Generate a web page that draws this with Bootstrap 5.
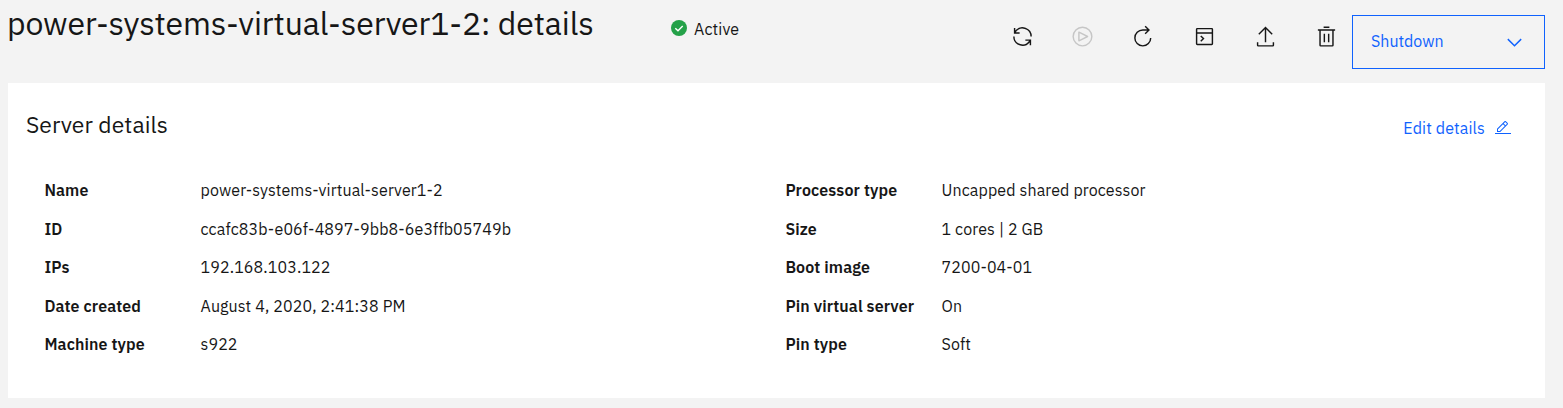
<!DOCTYPE html>
<html lang="en">
<head>
<meta charset="utf-8">
<meta name="viewport" content="width=device-width, initial-scale=1">
<title>power-systems-virtual-server1-2: details</title>
<link rel="stylesheet" href="https://cdn.jsdelivr.net/npm/bootstrap@5.3.0/dist/css/bootstrap.min.css">
<style>
  body { background: #f3f3f3; color: #161616; font-family: "IBM Plex Sans", "Noto Sans", sans-serif; font-size: 16px; line-height: 20px; letter-spacing: .12px; overflow: hidden; }
  svg { fill: currentColor; display: block; flex: none; }
  .page { padding: 0 18px 10px 8px; }
  .page-head { height: 83px; }
  .page-title { font-size: 32px; line-height: 40px; letter-spacing: -.1px; margin: 3px 0 0 -1px; width: 664px; }
  .status { gap: 7px; padding-top: 19px; height: 40px; }
  .status svg { margin-top: 1px; }
  .tools { gap: 37.8px; padding-top: 25px; margin-right: 14.4px; }
  .tool { padding: 0; border: 0; background: none; color: #161616; }
  .tool:disabled { color: #c6c6c6; }
  .btn-action { width: 193px; height: 54px; margin-top: 15px; border: 1px solid #0f62fe; border-radius: 0; color: #0f62fe; font-size: 16px; line-height: 20px; padding: 0 18px; }
  .btn-action span { margin-bottom: 2px; }
  .panel { height: 315px; border: 0; border-radius: 0; color: inherit; padding: 0 33px 0 18px; }
  .panel-title { font-size: 22.9px; line-height: 28px; letter-spacing: .06px; margin: 28px 0 0; }
  .edit-link { color: #0f62fe; gap: 10px; margin: 35px 1px 0 0; }
  .edit-link svg { margin-top: 2px; }
  .facts { margin: 32px 0 0 18px; }
  .fact-list { width: 741px; flex: none; }
  .fact-list + .fact-list { width: 600px; }
  .fact { height: 38.5px; }
  .fact dt { width: 156px; font-weight: 600; padding-left: .4px; }
  .fact dd { margin: 0 0 0 .5px; }
</style>
</head>
<body>
<main class="page">
  <header class="page-head d-flex align-items-start">
    <h1 class="page-title fw-normal text-nowrap">power-systems-virtual-server1-2: details</h1>
    <div class="status d-flex align-items-start">
      <svg width="16" height="16" viewBox="0 0 16 16" aria-hidden="true"><circle cx="8" cy="8" r="8" fill="#24a148"/><path d="M4.3 8.2 7 10.8l4.7-4.7" fill="none" stroke="#fff" stroke-width="1.4"/></svg>
      <span>Active</span>
    </div>
    <div class="tools d-flex ms-auto">
      <button class="tool" aria-label="Refresh"><svg width="23" height="23" viewBox="0 0 32 32"><path d="M12 10H6.780A11 11 0 0 1 27 16h2A13 13 0 0 0 6 7.680V4H4v8h8zM20 22h5.220A11 11 0 0 1 5 16H3a13 13 0 0 0 23 8.320V28h2v-8h-8z"/></svg></button>
      <button class="tool" aria-label="Start" disabled><svg width="23" height="23" viewBox="0 0 32 32"><path d="M11 23a1 1 0 0 1-1-1V10a1 1 0 0 1 1.447-.894l12 6a1 1 0 0 1 0 1.788l-12 6A1 1 0 0 1 11 23zm1-11.382v8.764L20.764 16z"/><path d="M16 2a14 14 0 1 0 14 14A14 14 0 0 0 16 2zm0 26a12 12 0 1 1 12-12 12 12 0 0 1-12 12z"/></svg></button>
      <button class="tool" aria-label="Restart"><svg width="23" height="23" viewBox="1 0 32 32"><path d="M26 18A10 10 0 1 1 16 8h6.182l-3.585 3.585L20 13l6-6-6-6-1.402 1.414L22.185 6H16a12 12 0 1 0 12 12z"/></svg></button>
      <button class="tool" aria-label="Open console"><svg width="23" height="23" viewBox="0 0 32 32"><path d="M26 4H6a2 2 0 0 0-2 2v20a2 2 0 0 0 2 2h20a2 2 0 0 0 2-2V6a2 2 0 0 0-2-2zm0 2v4H6V6zM6 26V12h20v14z"/><path d="M10.800 15.200l3.800 3.700-3.800 3.700" fill="none" stroke="currentColor" stroke-width="2"/></svg></button>
      <button class="tool" aria-label="Export"><svg width="23" height="23" viewBox="0 0 32 32"><path d="M26 24v4H6v-4H4v4a2 2 0 0 0 2 2h20a2 2 0 0 0 2-2v-4zM6 12l1.411 1.405L15 5.825V24h2V5.825l7.591 7.580L26 12 16 2z"/></svg></button>
      <button class="tool" aria-label="Delete"><svg width="23" height="23" viewBox="0 0 32 32"><path d="M12 12h2v12h-2zM18 12h2v12h-2zM4 6v2h2v20a2 2 0 0 0 2 2h16a2 2 0 0 0 2-2V8h2V6zm4 22V8h16v20zM12 2h8v2h-8z"/></svg></button>
    </div>
    <button class="btn btn-action d-flex align-items-center justify-content-between" type="button">
      <span>Shutdown</span>
      <svg width="23" height="23" viewBox="0 0 16 16" aria-hidden="true"><path d="M8 11 3 6l.7-.7L8 9.600l4.300-4.300.7.7z"/></svg>
    </button>
  </header>

  <section class="card panel">
    <div class="d-flex justify-content-between align-items-start">
      <h2 class="panel-title fw-normal">Server details</h2>
      <a class="edit-link d-flex text-decoration-none" href="#">Edit details
        <svg width="16" height="16" viewBox="0 0 32 32" aria-hidden="true"><path d="M0 26h32v2H0zM25.400 9c.8-.8.8-2 0-2.800l-3.600-3.600c-.8-.8-2-.8-2.800 0l-15 15V24h6.400zM20.400 4 24 7.600l-3 3L17.400 7zM6 22v-3.600l10-10 3.600 3.600-10 10z"/></svg>
      </a>
    </div>
    <div class="facts d-flex">
      <dl class="fact-list mb-0">
        <div class="fact d-flex align-items-center"><dt>Name</dt><dd>power-systems-virtual-server1-2</dd></div>
        <div class="fact d-flex align-items-center"><dt>ID</dt><dd>ccafc83b-e06f-4897-9bb8-6e3ffb05749b</dd></div>
        <div class="fact d-flex align-items-center"><dt>IPs</dt><dd>192.168.103.122</dd></div>
        <div class="fact d-flex align-items-center"><dt>Date created</dt><dd>August 4, 2020, 2:41:38 PM</dd></div>
        <div class="fact d-flex align-items-center"><dt>Machine type</dt><dd>s922</dd></div>
      </dl>
      <dl class="fact-list mb-0">
        <div class="fact d-flex align-items-center"><dt>Processor type</dt><dd>Uncapped shared processor</dd></div>
        <div class="fact d-flex align-items-center"><dt>Size</dt><dd>1 cores | 2 GB</dd></div>
        <div class="fact d-flex align-items-center"><dt>Boot image</dt><dd>7200-04-01</dd></div>
        <div class="fact d-flex align-items-center"><dt>Pin virtual server</dt><dd>On</dd></div>
        <div class="fact d-flex align-items-center"><dt>Pin type</dt><dd>Soft</dd></div>
      </dl>
    </div>
  </section>
</main>
<script src="https://cdn.jsdelivr.net/npm/bootstrap@5.3.0/dist/js/bootstrap.bundle.min.js"></script>
</body>
</html>
